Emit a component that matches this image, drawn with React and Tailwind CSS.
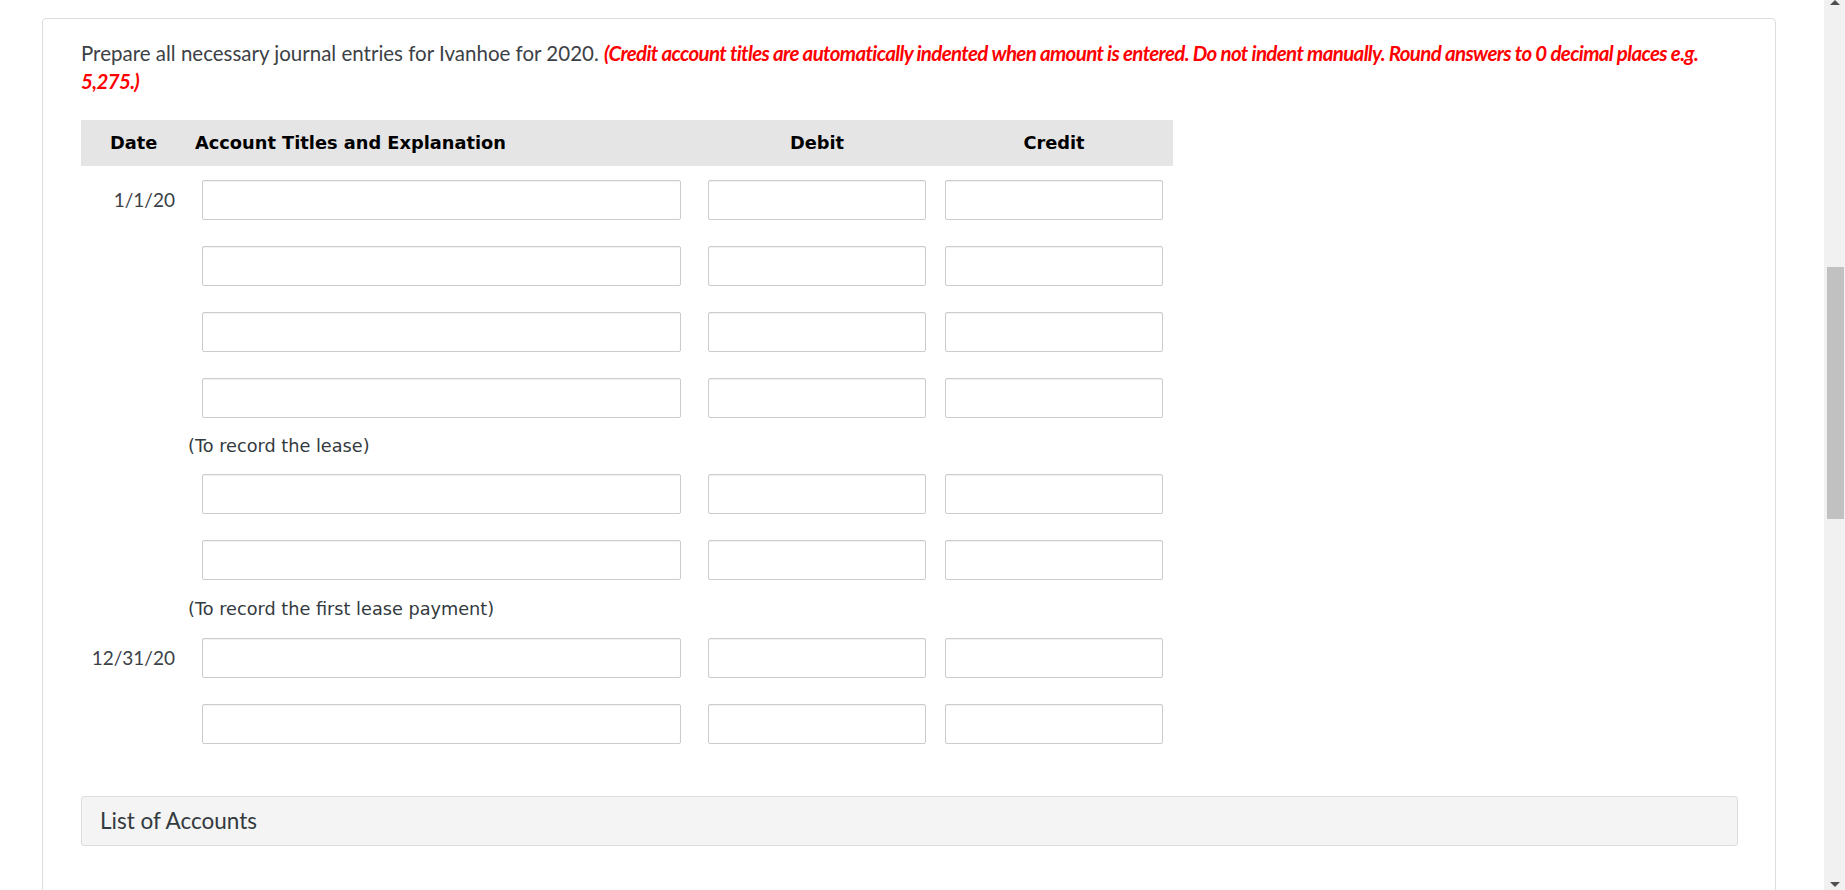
import React from "react";

const groups = [
  { date: "1/1/20", rows: 4, note: "(To record the lease)", noteH: "h-[30px]" },
  { date: "", rows: 2, note: "(To record the first lease payment)", noteH: "h-[32px]" },
  { date: "12/31/20", rows: 2, note: null },
];

function Field({ className }) {
  return (
    <input
      type="text"
      className={`h-[40px] rounded-[2px] border border-[#cccccc] bg-white shadow-[inset_0_1px_1px_rgba(0,0,0,0.06)] outline-none ${className}`}
    />
  );
}

function EntryRow({ date }) {
  return (
    <div className="flex items-center py-[13px]">
      <div className="w-[121px] pr-[27px] text-right text-[19px] text-[#3c4146] font-['Lato',sans-serif]">
        {date}
      </div>
      <Field className="w-[479px]" />
      <Field className="ml-[27px] w-[218px]" />
      <Field className="ml-[19px] w-[218px]" />
    </div>
  );
}

export default function App() {
  return (
    <div className="flex h-[890px] w-full overflow-hidden bg-white">
      <div className="flex-1 overflow-hidden pl-[42px] pr-[48px] pt-[18px]">
        <div className="h-[900px] rounded-[4px] border border-[#dddddd] pl-[38px] pr-[37px] pt-[20px] font-['Lato',sans-serif]">
          <p className="text-[20.5px] leading-[28px] text-[#3c4146]">
            Prepare all necessary journal entries for Ivanhoe for 2020.{" "}
            <span className="font-bold italic tracking-[-0.65px] text-[#ff0000]">
              (Credit account titles are automatically indented when amount is entered. Do not indent manually. Round answers to 0 decimal places e.g. 5,275.)
            </span>
          </p>

          <div className="mt-[25px] w-[1092px]">
            <div className="flex h-[46px] items-center bg-[#e5e5e5] font-['DejaVu_Sans',sans-serif] text-[17.8px] font-bold text-black">
              <div className="w-[114px] pl-[29px]">Date</div>
              <div className="w-[486px]">Account Titles and Explanation</div>
              <div className="ml-[27px] w-[218px] text-center">Debit</div>
              <div className="ml-[19px] w-[218px] text-center">Credit</div>
            </div>

            <div className="mt-[1px]">
              {groups.map((g, gi) => (
                <div key={gi}>
                  {Array.from({ length: g.rows }).map((_, i) => (
                    <EntryRow key={i} date={i === 0 ? g.date : ""} />
                  ))}
                  {g.note && (
                    <div
                      className={`flex items-center pl-[107px] font-['DejaVu_Sans',sans-serif] text-[17.7px] text-[#333a40] ${g.noteH}`}
                    >
                      {g.note}
                    </div>
                  )}
                </div>
              ))}
            </div>
          </div>

          <div className="mt-[39px] flex h-[50px] items-center rounded-[3px] border border-[#dddddd] bg-[#f4f4f4] pl-[18px] text-[22.5px] text-[#333a40]">
            List of Accounts
          </div>
        </div>
      </div>

      <div className="flex w-[21px] flex-col items-center bg-[#f1f1f1]">
        <svg width="10" height="5" viewBox="0 0 10 5">
          <path d="M0 5 L5 0 L10 5 Z" fill="#505050" />
        </svg>
        <div className="mt-[262px] ml-[2px] h-[252px] w-[17px] bg-[#c1c1c1]" />
        <div className="flex-1" />
        <svg width="10" height="5" viewBox="0 0 10 5" className="mb-[3px]">
          <path d="M0 0 L10 0 L5 5 Z" fill="#505050" />
        </svg>
      </div>
    </div>
  );
}
